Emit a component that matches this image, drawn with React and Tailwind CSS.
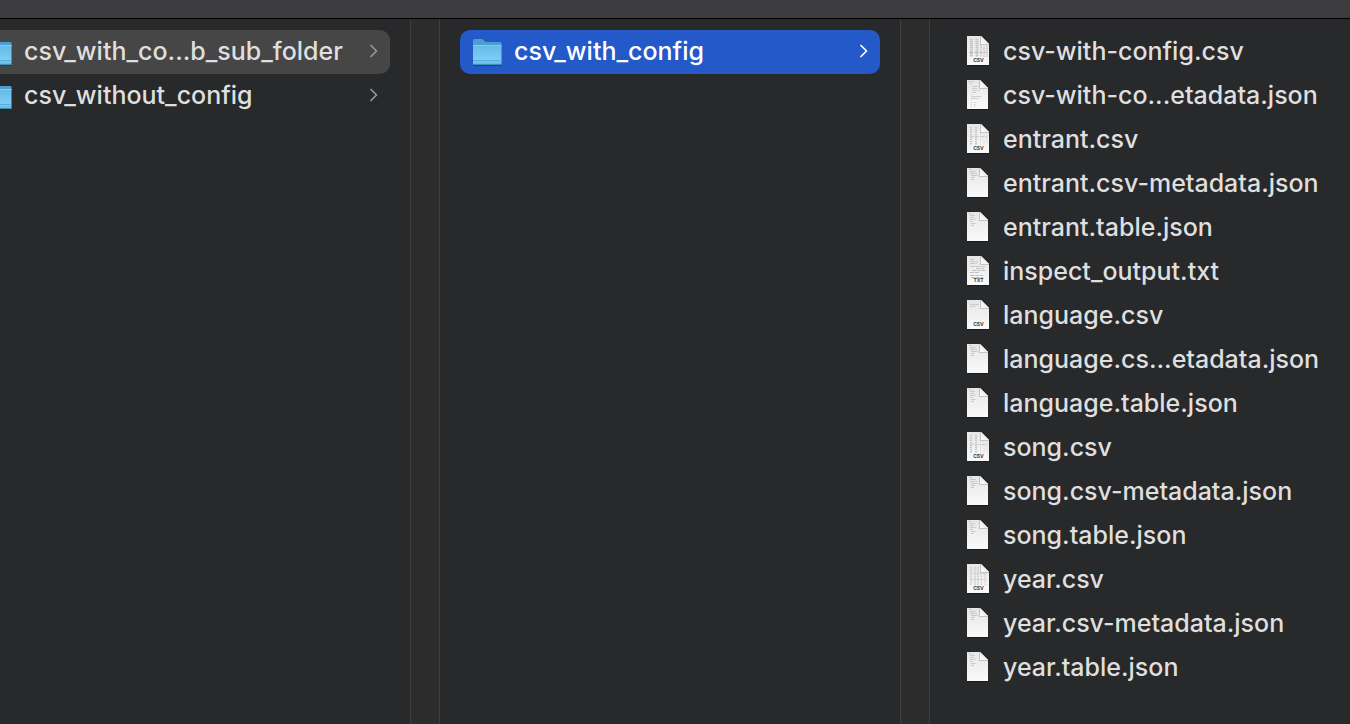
const FOLDERS = [
  { name: 'csv_with_co...b_sub_folder', selected: true },
  { name: 'csv_without_config', selected: false },
];

const FILES = [
  { name: 'csv-with-config.csv', label: 'CSV', art: 'dense' },
  { name: 'csv-with-co...etadata.json', art: 'long' },
  { name: 'entrant.csv', label: 'CSV', art: 'columns' },
  { name: 'entrant.csv-metadata.json', art: 'short' },
  { name: 'entrant.table.json', art: 'code' },
  { name: 'inspect_output.txt', label: 'TXT', art: 'text' },
  { name: 'language.csv', label: 'CSV', art: 'top' },
  { name: 'language.cs...etadata.json', art: 'short' },
  { name: 'language.table.json', art: 'code' },
  { name: 'song.csv', label: 'CSV', art: 'columns' },
  { name: 'song.csv-metadata.json', art: 'short' },
  { name: 'song.table.json', art: 'code' },
  { name: 'year.csv', label: 'CSV', art: 'grid' },
  { name: 'year.csv-metadata.json', art: 'short' },
  { name: 'year.table.json', art: 'code' },
];

const ART = {
  dense: [
    { d: 'M4.5 3V21M10 3V21', w: 3, dash: '1.5 .5', c: '#c6c6c6' },
    { d: 'M14 9V21M17 10V21M20 10V21', w: 2, dash: '1.5 .5', c: '#d0d0d0' },
    { d: 'M2 16.5H20', w: 1, dash: '4 1', c: '#bfbfbf' },
  ],
  columns: [
    { d: 'M4 3V21M9 3V21', w: 2, dash: '1.5 .8', c: '#c8c8c8' },
    { d: 'M13.5 9V21M17 10V21M20 10V21', w: 1, dash: '2 .8', c: '#dadada' },
    { d: 'M3 12.5H20', w: 1, dash: '4 1', c: '#cdcdcd' },
  ],
  grid: [
    { d: 'M4 3V21M8 3V21M11 3V21', w: 1.5, dash: '1.5 .6', c: '#cacaca' },
    { d: 'M14.5 9V21M18 10V21', w: 1, dash: '2 .5', c: '#cfcfcf' },
    { d: 'M3 9.5H20M3 15.5H20', w: 1, c: '#d6d6d6' },
  ],
  top: [
    { d: 'M3 4.5H12M3 6.5H8', w: 1, dash: '2.5 .5', c: '#c2c2c2' },
    { d: 'M4 3V8M8 3V7', w: 1, dash: '1 .5', c: '#d2d2d2' },
  ],
  text: [
    { d: 'M3 3.5H7M3 5.5H11M3 7.5H10M3 10.5H18', w: 1, dash: '5 .5', c: '#c8c8c8' },
    { d: 'M5 14.5H19M9 12.5H17M3 16.5H12M3 19.5H17M4 21.5H16', w: 1, dash: '4 .8', c: '#c0c0c0' },
  ],
  long: [
    { d: 'M1 1.5H8M3 3.5H5M5 6.5H12M5 8.5H10M5 10.5H13M5 12.5H9M5 16.5H14M5 18.5H12', w: 1, dash: '5 .5', c: '#cdcdcd' },
    { d: 'M4.5 14V20M4.5 22V28M7 22.5H9M7 24.5H9M7 26.5H9', w: 1, dash: '1.5 .8', c: '#d2d2d2' },
  ],
  short: [
    { d: 'M2 1.5H5M3 3.5H9M3 5.5H10M4 7.5H11M4 9.5H8M4 11.5H7', w: 1, dash: '5 .4', c: '#c6c6c6' },
  ],
  code: [
    { d: 'M2 1.5H4M3 3.5H8M3 5.5H7M3 7.5H9M3 9.5H6M4 11.5H9M4 13.5H7', w: 1, dash: '4 .4', c: '#cacaca' },
  ],
};

function FileIcon({ art, label }) {
  const w = label ? 22 : 21;
  const fold = w - 8;
  return (
    <svg viewBox="0 0 24 32" className="h-8 w-6 shrink-0" aria-hidden="true">
      <defs>
        <linearGradient id="paper" x1="0" y1="0" x2="0" y2="1">
          <stop offset="0" stopColor="#e6e6e6" />
          <stop offset="1" stopColor="#fafafa" />
        </linearGradient>
        <linearGradient id="corner" x1="0" y1="1" x2="1" y2="0">
          <stop offset="0" stopColor="#ffffff" />
          <stop offset="1" stopColor="#dcdcdc" />
        </linearGradient>
      </defs>
      <rect x="0" y="28" width={w} height="2" fill="#151516" opacity=".7" />
      <path d={`M0 0H${fold}L${w} 8V29H0Z`} fill="url(#paper)" />
      {ART[art].map((s) => (
        <path key={s.d} d={s.d} stroke={s.c} strokeWidth={s.w} strokeDasharray={s.dash} fill="none" />
      ))}
      <path d={`M${fold - 1} 0H${fold}L${w} 8V9H${fold - 1}Z`} fill="#c4c4c4" />
      <path d={`M${fold} 0L${w} 8H${fold}Z`} fill="url(#corner)" />
      {label && (
        <text x="11.5" y="26" textAnchor="middle" fontFamily="Inter, sans-serif" fontSize="5" fontWeight="700" fill="#3c3c3c">
          {label}
        </text>
      )}
    </svg>
  );
}

function FolderIcon({ className }) {
  return (
    <svg viewBox="0 0 30 28" className={`h-7 w-[30px] shrink-0 ${className}`} aria-hidden="true">
      <defs>
        <linearGradient id="front" x1="0" y1="0" x2="0" y2="1">
          <stop offset="0" stopColor="#64b9e7" />
          <stop offset="0.75" stopColor="#7dcdf5" />
          <stop offset="1" stopColor="#62b4de" />
        </linearGradient>
      </defs>
      <rect x="1" y="25" width="29" height="3" rx="1" fill="#10203a" opacity=".4" />
      <path d="M1 2.5Q1 1 2.500 1H9Q10.500 1 11.500 2L12.500 3Q13.500 4 15 4H28Q29.500 4 29.500 5V9H1Z" fill="#4a9fd0" />
      <path d="M1 7H29.500V26Q29.500 27 28.500 27H2Q1 27 1 26Z" fill="url(#front)" />
      <path d="M1 7.500H29.500" stroke="#82cdf2" />
      <path d="M1 22.500H29.500" stroke="#5aaeda" />
      <path d="M1 26.500H29.500" stroke="#4390bd" />
    </svg>
  );
}

function Chevron({ className }) {
  return (
    <svg viewBox="0 0 8 14" className={`mb-0.5 h-3.5 w-2 shrink-0 ${className}`} fill="none" stroke="currentColor" strokeWidth="1.7" strokeLinecap="round" strokeLinejoin="round" aria-hidden="true">
      <path d="M1 1.500L6.500 7L1 12.500" />
    </svg>
  );
}

function Gutter() {
  return <div className="w-[30px] shrink-0 border-x border-x-[#3e3e3f] bg-[#2c2c2c]" />;
}

export default function App() {
  return (
    <div className="flex h-screen flex-col overflow-hidden bg-[#28292b] font-['Inter',sans-serif] text-[25px] leading-[42px] font-medium text-[#dfdfdf]">
      <header className="h-[19px] shrink-0 border-b border-black bg-[#3c3c3e]" />
      <main className="flex min-h-0 flex-1">
        <ul className="w-[410px] shrink-0 overflow-hidden pt-[11px] pr-5">
          {FOLDERS.map((f) => (
            <li key={f.name}>
              <button type="button" className={`flex h-11 w-full items-center rounded-r-[10px] pr-3 text-left ${f.selected ? 'bg-[#464646]' : ''}`}>
                <FolderIcon className="-ml-[18px]" />
                <span className="ml-3 flex-1 pb-0.5 whitespace-nowrap">{f.name}</span>
                <Chevron className="text-[#98989a]" />
              </button>
            </li>
          ))}
        </ul>
        <Gutter />
        <ul className="w-[460px] shrink-0 px-5 pt-[11px]">
          <li>
            <button type="button" className="flex h-11 w-full items-center rounded-[10px] bg-[#2459ca] px-3 text-left text-white">
              <FolderIcon className="" />
              <span className="ml-3 flex-1 pb-0.5 whitespace-nowrap">csv_with_config</span>
              <Chevron className="" />
            </button>
          </li>
        </ul>
        <Gutter />
        <ul className="min-w-0 flex-1 overflow-hidden pt-[11px] pl-[37px]">
          {FILES.map((f) => (
            <li key={f.name}>
              <button type="button" className="flex h-11 w-full items-center text-left">
                <FileIcon art={f.art} label={f.label} />
                <span className="ml-3 pb-0.5 whitespace-nowrap">{f.name}</span>
              </button>
            </li>
          ))}
        </ul>
      </main>
    </div>
  );
}
